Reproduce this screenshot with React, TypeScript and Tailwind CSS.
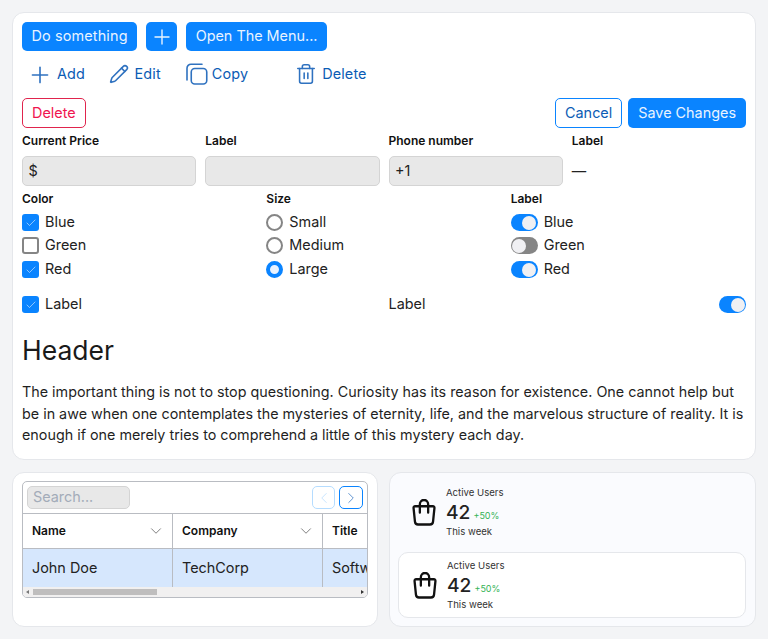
import React from "react";
import { Plus, Pencil, Trash2, ChevronDown, ChevronLeft, ChevronRight, Check } from "lucide-react";

function Solid({ children, className = "" }: { children: React.ReactNode; className?: string }) {
  return <button className={`h-[29px] rounded-[5px] bg-[#0a84ff] text-[#e8f3ff] px-[9.5px] pb-[1px] flex items-center ${className}`}>{children}</button>;
}
function Ghost({ icon, label, className = "" }: { icon: React.ReactNode; label: string; className?: string }) {
  return (
    <div className={`flex items-center text-[#0b5cb5] tracking-[0.15px] ${className}`}>
      {icon}
      <span className="pb-[1px]">{label}</span>
    </div>
  );
}
function Field({ label, children }: { label: string; children: React.ReactNode }) {
  return (
    <div className="flex flex-col">
      <div className="text-[12px] leading-[15px] font-semibold text-[#111] mt-[5px] mb-[8px]">{label}</div>
      {children}
    </div>
  );
}
function Input({ text }: { text?: string }) {
  return <div className="h-[30px] w-full rounded-[5px] border border-[#d4d4d4] bg-[#e8e8e8] px-[5.5px] pb-[1px] flex items-center text-[#222]">{text}</div>;
}
function Cb({ on, label }: { on: boolean; label: string }) {
  return (
    <div className="h-[17px] flex items-center gap-[6px]">
      {on ? (
        <span className="w-[17px] h-[17px] rounded-[3px] bg-[#0a84ff] flex items-center justify-center"><Check size={12} color="#dbeeff" strokeWidth={1.25} /></span>
      ) : (
        <span className="w-[17px] h-[17px] rounded-[3px] border-2 border-[#858585] bg-white" />
      )}
      <span className="pb-[1px]">{label}</span>
    </div>
  );
}
function Radio({ on, label }: { on: boolean; label: string }) {
  return (
    <div className="h-[17px] flex items-center gap-[6px]">
      <span className={`w-[17px] h-[17px] rounded-full ${on ? "border-[4px] border-[#0a84ff] bg-[#eaf3ff]" : "border-2 border-[#858585] bg-white"}`} />
      <span className="pb-[1px]">{label}</span>
    </div>
  );
}
function Toggle({ on }: { on: boolean }) {
  return (
    <span className={`w-[27px] h-[17px] rounded-full p-[1.5px] flex ${on ? "bg-[#0a84ff] justify-end" : "bg-[#858585] justify-start"}`}>
      <span className="w-[14px] h-[14px] rounded-full bg-[#f0f0f3]" />
    </span>
  );
}
function Tg({ on, label }: { on: boolean; label: string }) {
  return (
    <div className="h-[17px] flex items-center gap-[6px]">
      <Toggle on={on} />
      <span className="pb-[1px]">{label}</span>
    </div>
  );
}
function Bag() {
  return (
    <svg width="24" height="27" viewBox="0 0 26 28" preserveAspectRatio="none" fill="none" stroke="#111" strokeWidth="2.5" strokeLinecap="round" strokeLinejoin="round">
      <path d="M3.5 7.5H22.5Q24.5 7.5 24.3 9.5L22.8 23.5Q22.5 26.5 19.5 26.5H6.5Q3.5 26.5 3.2 23.5L1.7 9.5Q1.5 7.5 3.5 7.5Z" />
      <path d="M8.5 14V5.5A4.5 4.5 0 0 1 17.5 5.5V14" />
    </svg>
  );
}
function CopyIcon() {
  return (
    <svg width="22" height="22" viewBox="0 0 22 22" fill="none" stroke="#2f72c0" strokeWidth="1.6" strokeLinecap="round" strokeLinejoin="round" className="mr-[4px]">
      <rect x="5.25" y="5.5" width="15.5" height="15.5" rx="3.5" />
      <path d="M16 1.2H5A4 4 0 0 0 1 5.2V17" />
    </svg>
  );
}
function Stat() {
  return (
    <div className="flex items-center pl-[14px]">
      <Bag />
      <div className="ml-[10px] flex flex-col text-[#333]">
        <div className="text-[9.6px] leading-[14px]">Active Users</div>
        <div className="flex items-baseline h-[24px]">
          <span className="text-[19.2px] leading-[24px] text-[#222] font-medium">42</span>
          <span className="text-[9px] text-[#34b356] ml-[3px]">+50%</span>
        </div>
        <div className="text-[9.6px] leading-[14px] mt-[1px]">This week</div>
      </div>
    </div>
  );
}

export default function App() {
  const groups: [string, React.ReactNode][] = [
    ["Color", <><Cb on label="Blue" /><Cb on={false} label="Green" /><Cb on label="Red" /></>],
    ["Size", <><Radio on={false} label="Small" /><Radio on={false} label="Medium" /><Radio on label="Large" /></>],
    ["Label", <><Tg on label="Blue" /><Tg on={false} label="Green" /><Tg on label="Red" /></>],
  ];
  return (
    <div className="w-[768px] h-[639px] overflow-hidden bg-[#f3f4f6] p-[12px] text-[14.4px] text-[#222]" style={{ fontFamily: "Inter, sans-serif" }}>
      <div className="h-[448px] rounded-[12px] border border-[#e5e7eb] bg-white px-[9px] pt-[9px]">
        <div className="flex gap-[9px]">
          <Solid className="tracking-[0.15px]">Do something</Solid>
          <Solid className="w-[31px] justify-center !px-0 !pb-0"><Plus size={24} strokeWidth={1.4} /></Solid>
          <Solid>Open The Menu...</Solid>
        </div>
        <div className="flex h-[29px] items-center mt-[9px]">
          <Ghost className="ml-[4.5px] gap-[4.5px]" label="Add" icon={<Plus size={26} color="#2f72c0" strokeWidth={1.5} />} />
          <Ghost className="ml-[23.5px] gap-[6px]" label="Edit" icon={<Pencil size={20} color="#2f72c0" strokeWidth={1.9} />} />
          <Ghost className="ml-[25px]" label="Copy" icon={<CopyIcon />} />
          <Ghost className="ml-[47px] gap-[5px]" label="Delete" icon={<Trash2 size={22} color="#2f72c0" strokeWidth={1.7} />} />
        </div>
        <div className="flex items-center mt-[9px] h-[30px]">
          <button className="h-[30px] px-[9px] rounded-[5px] border border-[#e0244d] text-[#f0144f] bg-white">Delete</button>
          <div className="flex-1" />
          <button className="h-[30px] px-[9px] rounded-[5px] border border-[#0a84ff] text-[#0b5cb5] bg-white">Cancel</button>
          <button className="h-[30px] px-[10px] rounded-[5px] bg-[#0a84ff] text-[#e8f3ff] ml-[6px]">Save Changes</button>
        </div>
        <div className="grid grid-cols-4 gap-x-[9px]">
          <Field label="Current Price"><Input text="$" /></Field>
          <Field label="Label"><Input /></Field>
          <Field label="Phone number"><Input text="+1" /></Field>
          <Field label="Label"><div className="h-[30px] pb-[1px] flex items-center">—</div></Field>
        </div>
        <div className="grid grid-cols-3 gap-x-[9px]">
          {groups.map(([t, c], i) => (
            <div key={i}>
              <div className="text-[12px] leading-[15px] font-semibold text-[#111] mt-[5px] mb-[8px]">{t}</div>
              <div className="flex flex-col gap-[6px] [&>*:last-child]:mt-[1px]">{c}</div>
            </div>
          ))}
        </div>
        <div className="grid grid-cols-2 gap-x-[9px] mt-[18px]">
          <Cb on label="Label" />
          <div className="flex justify-between items-center h-[17px]"><span className="pb-[1px]">Label</span><Toggle on /></div>
        </div>
        <div className="text-[26.5px] leading-[34px] text-[#1a1a1a] mt-[20px]">Header</div>
        <p className="mt-[14px] text-[14.33px] leading-[21.6px] text-[#1f1f1f]">
          The important thing is not to stop questioning. Curiosity has its reason for existence. One cannot help but be in awe when one contemplates the mysteries of eternity, life, and the marvelous structure of reality. It is enough if one merely tries to comprehend a little of this mystery each day.
        </p>
      </div>
      <div className="flex gap-[11px] mt-[12px]">
        <div className="w-[366px] h-[155px] rounded-[12px] border border-[#e5e7eb] bg-white px-[9px] pt-[8px]">
          <div className="h-[117px] rounded-[5px] border border-[#b9bcc2] overflow-hidden">
            <div className="h-[31px] flex items-center justify-between px-[4px]">
              <div className="w-[103px] h-[23px] rounded-[5px] border border-[#d4d4d4] bg-[#e8e8e8] px-[5px] pb-[1px] flex items-center text-[#a3acb9]">Search...</div>
              <div className="flex gap-[4px]">
                <span className="w-[23px] h-[23px] rounded-[5px] border border-[#b5dcff] flex items-center justify-center"><ChevronLeft size={18} color="#b5dcff" strokeWidth={1} /></span>
                <span className="w-[24px] h-[23px] rounded-[5px] border border-[#0a84ff] flex items-center justify-center"><ChevronRight size={18} color="#2f72c0" strokeWidth={1} /></span>
              </div>
            </div>
            <div className="flex h-[36px] border-y border-[#b9bcc2] text-[12px] font-semibold text-[#111]">
              <div className="w-[150px] shrink-0 border-r border-[#b9bcc2] flex items-center justify-between pl-[9px] pr-[7px]"><span className="pb-[1px]">Name</span><ChevronDown size={18} color="#555" strokeWidth={1} /></div>
              <div className="w-[150px] shrink-0 border-r border-[#b9bcc2] flex items-center justify-between pl-[9px] pr-[7px]"><span className="pb-[1px]">Company</span><ChevronDown size={18} color="#555" strokeWidth={1} /></div>
              <div className="pl-[9px] pb-[1px] flex items-center">Title</div>
            </div>
            <div className="flex h-[38px] bg-[#d6e7fd] text-[#222] whitespace-nowrap">
              <div className="w-[150px] shrink-0 border-r border-[#b9bcc2] flex items-center pl-[9px] pb-[1px]">John Doe</div>
              <div className="w-[150px] shrink-0 border-r border-[#b9bcc2] flex items-center pl-[9px] pb-[1px]">TechCorp</div>
              <div className="pl-[9px] pb-[1px] flex items-center">Software</div>
            </div>
            <div className="h-[10px] bg-[#f1f0f0] flex items-center px-[3px]">
              <span className="w-0 h-0 border-y-[2.5px] border-y-transparent border-r-[3px] border-r-[#777]" />
              <span className="w-[124px] h-[6px] bg-[#bfbebe] ml-[4px]" />
              <span className="ml-auto w-0 h-0 border-y-[2.5px] border-y-transparent border-l-[3px] border-l-[#333]" />
            </div>
          </div>
        </div>
        <div className="w-[367px] h-[155px] rounded-[12px] border border-[#e5e7eb] bg-[#fafbfe] pl-[8px] pr-[9px] pt-[9px]">
          <div className="h-[62px] pt-[4px]"><Stat /></div>
          <div className="mt-[8px] h-[66px] rounded-[10px] border border-[#e5e7eb] bg-white pt-[6px]"><Stat /></div>
        </div>
      </div>
    </div>
  );
}
